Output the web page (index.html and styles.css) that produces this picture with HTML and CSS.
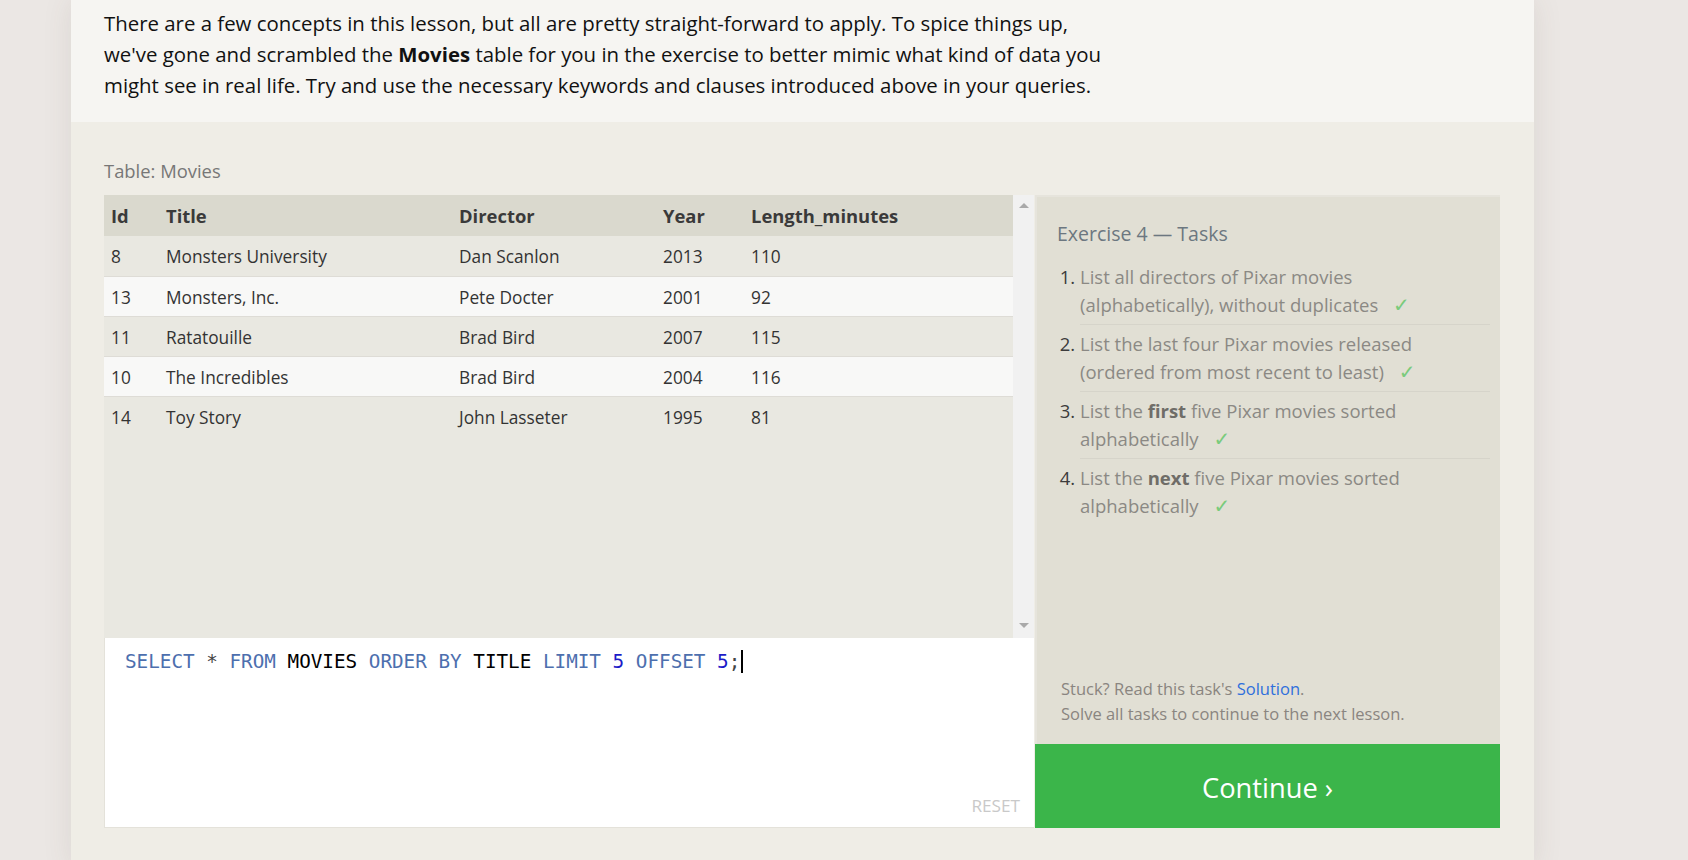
FILE: index.html
```html
<!DOCTYPE html>
<html lang="en">
<head>
<meta charset="utf-8">
<title>SQL Lesson — Exercise 4</title>
<link rel="stylesheet" href="styles.css">
</head>
<body>
<div class="page">
  <section class="intro">
    <p>There are a few concepts in this lesson, but all are pretty straight-forward to apply. To spice things up,<br>we've gone and scrambled the <strong>Movies</strong> table for you in the exercise to better mimic what kind of data you<br>might see in real life. Try and use the necessary keywords and clauses introduced above in your queries.</p>
  </section>
  <section class="exercise">
    <div class="table-label">Table: Movies</div>
    <div class="workspace">
      <div class="left">
        <div class="results">
          <div class="table-scroll">
            <table class="movies">
              <thead>
                <tr><th class="c-id">Id</th><th class="c-title">Title</th><th class="c-dir">Director</th><th class="c-year">Year</th><th class="c-len">Length_minutes</th></tr>
              </thead>
              <tbody>
                <tr><td>8</td><td>Monsters University</td><td>Dan Scanlon</td><td>2013</td><td>110</td></tr>
                <tr><td>13</td><td>Monsters, Inc.</td><td>Pete Docter</td><td>2001</td><td>92</td></tr>
                <tr><td>11</td><td>Ratatouille</td><td>Brad Bird</td><td>2007</td><td>115</td></tr>
                <tr><td>10</td><td>The Incredibles</td><td>Brad Bird</td><td>2004</td><td>116</td></tr>
                <tr><td>14</td><td>Toy Story</td><td>John Lasseter</td><td>1995</td><td>81</td></tr>
              </tbody>
            </table>
          </div>
          <div class="scrollbar">
            <span class="arrow up"></span>
            <span class="arrow down"></span>
          </div>
        </div>
        <div class="editor">
          <div class="code"><span class="kw">SELECT</span> <span class="op">*</span> <span class="kw">FROM</span> <span class="id">MOVIES</span> <span class="kw">ORDER BY</span> <span class="id">TITLE</span> <span class="kw">LIMIT</span> <span class="num">5</span> <span class="kw">OFFSET</span> <span class="num">5</span><span class="op">;</span><span class="cursor"></span></div>
          <span class="reset">RESET</span>
        </div>
      </div>
      <aside class="tasks-panel">
        <div class="tasks-body">
          <h3 class="tasks-title">Exercise 4 — Tasks</h3>
          <ol class="tasks">
            <li>List all directors of Pixar movies<br>(alphabetically), without duplicates <span class="check">✓</span></li>
            <li>List the last four Pixar movies released<br>(ordered from most recent to least) <span class="check">✓</span></li>
            <li>List the <strong>first</strong> five Pixar movies sorted<br>alphabetically <span class="check">✓</span></li>
            <li>List the <strong>next</strong> five Pixar movies sorted<br>alphabetically <span class="check">✓</span></li>
          </ol>
        </div>
        <div class="help">
          <div>Stuck? Read this task's <a href="#" class="link">Solution</a>.</div>
          <div>Solve all tasks to continue to the next lesson.</div>
        </div>
        <button class="continue">Continue ›</button>
      </aside>
    </div>
  </section>
</div>
</body>
</html>
```

FILE: styles.css
```css
html, body {
  margin: 0;
  padding: 0;
}
body {
  background: #ebe7e4;
  font-family: "Open Sans", "Noto Sans", "DejaVu Sans", sans-serif;
  color: #222;
  height: 860px;
  overflow: hidden;
}
.page {
  margin-left: 71px;
  width: 1463px;
  min-height: 860px;
  background: #efede6;
  box-shadow: 0 0 28px rgba(90, 70, 60, 0.10);
}
.intro {
  background: #f6f5f2;
  padding: 8px 33px 20px 33px;
}
.intro p {
  margin: 0;
  width: 1200px;
  font-size: 20.4px;
  line-height: 31.2px;
  color: #111;
}
.intro strong {
  font-weight: 700;
}
.exercise {
  padding: 37px 34px 40px 33px;
}
.table-label {
  font-size: 18.4px;
  line-height: 24px;
  color: #777;
  margin-bottom: 12px;
}
.workspace {
  display: flex;
  height: 633px;
}
.left {
  width: 930px;
  display: flex;
  flex-direction: column;
}
.results {
  height: 443px;
  display: flex;
  background: #e9e8e1;
}
.table-scroll {
  flex: 1;
  overflow: hidden;
}
.movies {
  width: 100%;
  border-collapse: collapse;
  font-size: 17.3px;
  color: #333;
}
.movies th {
  text-align: left;
  font-weight: 700;
  font-size: 18.4px;
  background: #dad9ce;
  height: 40px;
  padding: 1px 7px 0 7px;
  color: #3a3a3a;
}
.movies td {
  height: 37px;
  padding: 2px 7px 0 7px;
  border-top: 1px solid #dedcd6;
}
.movies tbody tr:nth-child(odd) td {
  background: #e9e8e1;
}
.movies tbody tr:nth-child(even) td {
  background: #f8f8f7;
}
.movies tbody tr:first-child td {
  border-top: none;
  height: 38px;
}
.c-id { width: 41px; }
.c-title { width: 279px; }
.c-dir { width: 190px; }
.c-year { width: 74px; }
.scrollbar {
  width: 21px;
  background: #f1f1f1;
  position: relative;
}
.arrow {
  position: absolute;
  left: 6px;
  width: 0;
  height: 0;
  border-left: 5px solid transparent;
  border-right: 5px solid transparent;
}
.arrow.up {
  top: 8px;
  border-bottom: 5px solid #a9a9a9;
}
.arrow.down {
  bottom: 10px;
  border-top: 5px solid #a9a9a9;
}
.editor {
  flex: 1;
  background: #fff;
  display: flex;
  flex-direction: column;
  padding: 11px 14px 11px 20px;
  border-bottom: 1px solid #e4e2da;
  border-left: 1px solid #e4e2da;
}
.code {
  font-family: "DejaVu Sans Mono", "Liberation Mono", monospace;
  font-size: 19.3px;
  line-height: 26px;
  color: #333;
  white-space: pre;
}
.kw { color: #4d6fae; }
.op { color: #444; }
.id { color: #000; }
.num { color: #1b1bc8; }
.cursor {
  display: inline-block;
  width: 2px;
  height: 23px;
  background: #000;
  vertical-align: -5px;
  margin-left: 1px;
}
.reset {
  margin-top: auto;
  align-self: flex-end;
  font-size: 17.2px;
  line-height: 20px;
  color: #c9c9c9;
}
.tasks-panel {
  width: 465px;
  margin-left: 1px;
  background: #e1dfd4;
  display: flex;
  flex-direction: column;
  box-shadow: inset 0 2px 0 #e6e4dc, inset 2px 0 0 #e6e4dc;
}
.tasks-body {
  padding: 26px 10px 0 22px;
}
.tasks-title {
  margin: 0;
  font-weight: 400;
  font-size: 19.5px;
  line-height: 26px;
  color: #6c7780;
}
.tasks {
  margin: 11px 0 0 0;
  padding-left: 23px;
  font-size: 18.5px;
  line-height: 28.5px;
  color: #8b8984;
}
.tasks li {
  padding: 5px 0 4px 0;
  border-bottom: 1px solid #d6d4ca;
}
.tasks li:last-child {
  border-bottom: none;
}
.tasks li::marker {
  color: #3c3c3c;
}
.tasks strong {
  color: #6f6d68;
}
.check {
  color: #7acb7c;
  margin-left: 10px;
  font-family: "DejaVu Sans", sans-serif;
  font-size: 20px;
}
.help {
  margin-top: auto;
  padding: 0 10px 18px 26px;
  font-size: 16.5px;
  line-height: 25px;
  color: #8a8580;
}
.link {
  color: #2f6fdc;
  text-decoration: none;
}
.continue {
  height: 84px;
  border: none;
  background: #3bb54a;
  color: #fff;
  font-family: "Open Sans", "Noto Sans", sans-serif;
  font-size: 27.3px;
  padding: 4px 0 0 0;
  cursor: pointer;
}
```
